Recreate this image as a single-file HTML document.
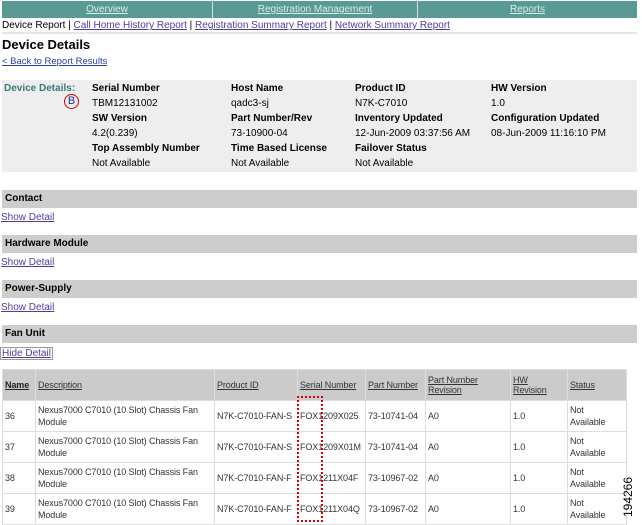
<!DOCTYPE html>
<html><head><meta charset="utf-8"><style>
*{margin:0;padding:0;box-sizing:border-box}
body{width:642px;height:525px;background:#fff;font-family:"Liberation Sans",Arial,sans-serif;font-size:10px;color:#000;position:relative;overflow:hidden}
.a{position:absolute;white-space:nowrap}
.nav{position:absolute;top:1px;left:2px;width:635px;height:17px;background:#5a9a94;display:flex}
.nav div{flex:none;text-align:center;color:#d8ece8;text-decoration:underline;line-height:17px;font-size:10px;border-right:1px solid #cfe3e0}
.lnk{color:#4a3fa0;text-decoration:underline}
.b{font-weight:bold}
.band{position:absolute;left:2px;width:635px;height:18px;background:#cdcdcd;font-weight:bold;font-size:10px;line-height:18px;padding-left:3px}
table{position:absolute;left:2px;top:369px;border-collapse:collapse;width:624px;table-layout:fixed}
td,th{border:1px solid #ddd;font-size:9px;letter-spacing:-0.1px;vertical-align:middle;padding:0 2px;text-align:left;font-weight:normal;overflow:hidden}
th{background:#cbcbcb;height:31px;color:#333;text-decoration:underline}
td{height:31px;color:#333;line-height:12px}
.nw{white-space:nowrap}
</style></head><body>
<div class="nav"><div style="width:211px">Overview</div><div style="width:205px">Registration Management</div><div style="width:219px;border:none">Reports</div></div>
<div class="a" style="top:20px;left:2px;font-size:10px">Device Report | <span class="lnk">Call Home History Report</span> | <span class="lnk">Registration Summary Report</span> | <span class="lnk">Network Summary Report</span></div>
<div class="a" style="top:32px;left:2px;width:635px;height:2px;background:#e6e6e6"></div>
<div class="a b" style="top:37px;left:2px;font-size:13px">Device Details</div>
<div class="a lnk" style="top:56px;left:2px;font-size:9.5px;color:#2c3fa0">&lt; Back to Report Results</div>
<div class="a" style="top:80px;left:2px;width:635px;height:92px;background:#eeeeee"></div>
<div class="a b" style="top:83px;left:4px;color:#3c7a74">Device Details:</div>
<div class="a" style="top:94px;left:64px;width:15px;height:15px;border:1.5px solid #c00;border-radius:50%;color:#1a2a9a;font-size:11px;text-align:center;line-height:12px">B</div>
<div class="a b" style="top:83px;left:92px">Serial Number</div>
<div class="a" style="top:98px;left:92px">TBM12131002</div>
<div class="a b" style="top:113px;left:92px">SW Version</div>
<div class="a" style="top:128px;left:92px">4.2(0.239)</div>
<div class="a b" style="top:143px;left:92px">Top Assembly Number</div>
<div class="a" style="top:158px;left:92px">Not Available</div>
<div class="a b" style="top:83px;left:231px">Host Name</div>
<div class="a" style="top:98px;left:231px">qadc3-sj</div>
<div class="a b" style="top:113px;left:231px">Part Number/Rev</div>
<div class="a" style="top:128px;left:231px">73-10900-04</div>
<div class="a b" style="top:143px;left:231px">Time Based License</div>
<div class="a" style="top:158px;left:231px">Not Available</div>
<div class="a b" style="top:83px;left:355px">Product ID</div>
<div class="a" style="top:98px;left:355px">N7K-C7010</div>
<div class="a b" style="top:113px;left:355px">Inventory Updated</div>
<div class="a" style="top:128px;left:355px">12-Jun-2009 03:37:56 AM</div>
<div class="a b" style="top:143px;left:355px">Failover Status</div>
<div class="a" style="top:158px;left:355px">Not Available</div>
<div class="a b" style="top:83px;left:491px">HW Version</div>
<div class="a" style="top:98px;left:491px">1.0</div>
<div class="a b" style="top:113px;left:491px">Configuration Updated</div>
<div class="a" style="top:128px;left:491px">08-Jun-2009 11:16:10 PM</div>
<div class="band" style="top:190px">Contact</div>
<div class="a lnk" style="top:212px;left:1px">Show Detail</div>
<div class="band" style="top:235px">Hardware Module</div>
<div class="a lnk" style="top:257px;left:1px">Show Detail</div>
<div class="band" style="top:280px">Power-Supply</div>
<div class="a lnk" style="top:302px;left:1px">Show Detail</div>
<div class="band" style="top:325px">Fan Unit</div>
<div class="a lnk" style="top:347px;left:0;border:1px solid #999;padding:0 1px">Hide Detail</div>
<table>
<colgroup><col style="width:33px"><col style="width:179px"><col style="width:83px"><col style="width:68px"><col style="width:60px"><col style="width:85px"><col style="width:57px"><col style="width:59px"></colgroup>
<tr><th style="font-weight:bold;color:#222">Name</th><th>Description</th><th>Product ID</th><th class="nw">Serial Number</th><th class="nw">Part Number</th><th>Part Number<br>Revision</th><th>HW<br>Revision</th><th>Status</th></tr>
<tr><td>36</td><td>Nexus7000 C7010 (10 Slot) Chassis Fan Module</td><td class="nw">N7K-C7010-FAN-S</td><td class="nw">FOX1209X025</td><td class="nw">73-10741-04</td><td>A0</td><td>1.0</td><td>Not<br>Available</td></tr>
<tr><td>37</td><td>Nexus7000 C7010 (10 Slot) Chassis Fan Module</td><td class="nw">N7K-C7010-FAN-S</td><td class="nw">FOX1209X01M</td><td class="nw">73-10741-04</td><td>A0</td><td>1.0</td><td>Not<br>Available</td></tr>
<tr><td>38</td><td>Nexus7000 C7010 (10 Slot) Chassis Fan Module</td><td class="nw">N7K-C7010-FAN-F</td><td class="nw">FOX1211X04F</td><td class="nw">73-10967-02</td><td>A0</td><td>1.0</td><td>Not<br>Available</td></tr>
<tr><td>39</td><td>Nexus7000 C7010 (10 Slot) Chassis Fan Module</td><td class="nw">N7K-C7010-FAN-F</td><td class="nw">FOX1211X04Q</td><td class="nw">73-10967-02</td><td>A0</td><td>1.0</td><td>Not<br>Available</td></tr>
</table>
<div class="a" style="top:396px;left:297px;width:26px;height:126px;border:2px dotted #d00"></div>
<div class="a" style="top:490px;left:608px;font-size:12px;transform:rotate(-90deg);transform-origin:center">194266</div>
</body></html>
